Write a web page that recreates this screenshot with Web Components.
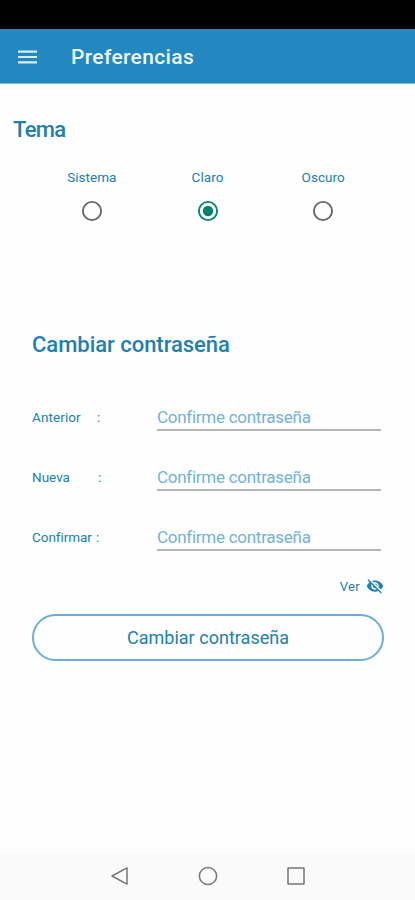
<!DOCTYPE html>
<html lang="es">
<head>
<meta charset="utf-8">
<title>Preferencias</title>
<style>
    body {
        margin: 0;
        background: #fefefe;
        color: #2080b0;
        font-family: Roboto, "Liberation Sans", sans-serif;
    }
</style>
</head>
<body>

<preferences-screen></preferences-screen>

<template id="screenTemplate">
    <style>
        :host {
            display: flex;
            flex-direction: column;
            height: 900px;
            width: 415px;
            overflow: hidden;
        }
        .status { height: 29px; background: #000; flex: none; }
        main { flex: 1; display: flex; flex-direction: column; }
        h2 { margin: 0; font-weight: 500; line-height: 26px; font-size: 22px; white-space: nowrap; }
        .theme { padding: 33px 0 0 13px; letter-spacing: -0.7px; }
        .options { display: flex; padding: 24px 34px 0 34px; }
        theme-option { flex: 1; }
        .password { padding: 110px 31px 0 32px; }
        .password h2 { letter-spacing: -0.03px; }
        .fields { margin-top: 43px; }
        .show {
            display: flex;
            justify-content: flex-end;
            align-items: center;
            gap: 6px;
            height: 20px;
            margin-top: -5px;
            font-size: 13px;
            letter-spacing: 0.3px;
        }
        .show svg { display: block; }
        pill-button { margin-top: 18px; }
    </style>
    <div class="status"></div>
    <app-header>Preferencias</app-header>
    <main>
        <h2 class="theme">Tema</h2>
        <div class="options">
            <theme-option>Sistema</theme-option>
            <theme-option checked>Claro</theme-option>
            <theme-option>Oscuro</theme-option>
        </div>
        <section class="password">
            <h2>Cambiar contraseña</h2>
            <div class="fields">
                <password-field colon="65" style="--ls: 0.1px">Anterior</password-field>
                <password-field colon="66">Nueva</password-field>
                <password-field colon="64" style="--ls: -0.05px">Confirmar</password-field>
            </div>
            <div class="show">
                <span>Ver</span>
                <svg width="18" height="18" viewBox="0 0 24 24" fill="#2080b0"><path d="M12 7c2.76 0 5 2.24 5 5 0 .65-.13 1.26-.36 1.83l2.92 2.92c1.51-1.26 2.7-2.89 3.43-4.75-1.73-4.39-6-7.5-11-7.5-1.4 0-2.74.25-3.98.7l2.16 2.16C10.74 7.13 11.35 7 12 7zM2 4.27l2.28 2.28.46.46C3.08 8.3 1.78 10.02 1 12c1.73 4.39 6 7.5 11 7.5 1.55 0 3.03-.3 4.38-.84l.42.42L19.73 22 21 20.73 3.27 3 2 4.27zM7.53 9.8l1.55 1.55c-.05.21-.08.43-.08.65 0 1.66 1.34 3 3 3 .22 0 .44-.03.65-.08l1.55 1.55c-.67.33-1.41.53-2.2.53-2.76 0-5-2.24-5-5 0-.79.2-1.53.53-2.2zm4.31-.78l3.15 3.15.02-.16c0-1.66-1.34-3-3-3l-.17.01z"/></svg>
            </div>
            <pill-button>Cambiar contraseña</pill-button>
        </section>
    </main>
    <system-nav></system-nav>
</template>

<template id="headerTemplate">
    <style>
        :host {
            display: flex;
            align-items: center;
            flex: none;
            box-sizing: border-box;
            height: 55px;
            padding: 1px 0 0 18px;
            background: #2387c0;
            border-bottom: 1px solid #7db8dc;
            color: #eef8ff;
            font-size: 21px;
            font-weight: 500;
            letter-spacing: 0.35px;
        }
        svg { margin-right: 33px; }
    </style>
    <svg width="20" height="14" viewBox="0 0 20 14"><path d="M0 1.7h19M0 7h19M0 12.3h19" stroke="#d8effb" stroke-width="2.2"/></svg>
    <slot></slot>
</template>

<template id="optionTemplate">
    <style>
        :host {
            display: flex;
            flex-direction: column;
            align-items: center;
            font-size: 13.5px;
            line-height: 20px;
            letter-spacing: 0.05px;
        }
        svg { margin-top: 13px; }
        circle { fill: none; stroke: #686868; stroke-width: 1.9; }
        .dot { display: none; }
        :host([checked]) circle { stroke: #0b8270; }
        :host([checked]) .dot { display: block; fill: #0b8270; stroke: none; }
    </style>
    <slot></slot>
    <svg width="22" height="22" viewBox="0 0 22 22"><circle cx="11" cy="11" r="9.1"/><circle class="dot" cx="11" cy="11" r="5.2"/></svg>
</template>

<template id="fieldTemplate">
    <style>
        :host { display: flex; height: 60px; }
        .label {
            display: flex;
            width: 125px;
            font-size: 13.5px;
            line-height: 26px;
            letter-spacing: var(--ls, 0);
            padding-top: 3px;
        }
        .entry {
            box-sizing: border-box;
            width: 224px;
            height: 30px;
            padding-top: 3px;
            border-bottom: 2px solid #b5b5b5;
            color: #72b2d7;
            font-size: 17px;
            line-height: 26px;
            letter-spacing: -0.27px;
            white-space: nowrap;
        }
    </style>
    <div class="label"><span class="name"><slot></slot></span><span>:</span></div>
    <div class="entry">Confirme contraseña</div>
</template>

<template id="buttonTemplate">
    <style>
        :host {
            display: flex;
            align-items: center;
            justify-content: center;
            box-sizing: border-box;
            height: 47px;
            border: 2px solid #6aadd6;
            border-radius: 24px;
            font-size: 18px;
            letter-spacing: 0.02px;
        }
    </style>
    <slot></slot>
</template>

<template id="navTemplate">
    <style>
        :host {
            display: flex;
            align-items: center;
            justify-content: center;
            gap: 68px;
            box-sizing: border-box;
            height: 47px;
            padding-bottom: 2px;
            background: #fafafa;
        }
        svg { fill: none; stroke: #777; stroke-width: 1.5; stroke-linejoin: round; }
    </style>
    <svg width="20" height="20" viewBox="0 0 20 20"><path d="M17 1.8v16.4L2 10z"/></svg>
    <svg width="20" height="20" viewBox="0 0 20 20"><circle cx="10" cy="10" r="8.6"/></svg>
    <svg width="20" height="20" viewBox="0 0 20 20"><rect x="2" y="2" width="16" height="16" rx="0.5"/></svg>
</template>

<script>
    (function preferences(customElements) {
        'use strict';

        class BaseElement extends HTMLElement {

            constructor(templateId) {
                super();
                const templ = document.querySelector(templateId);
                this.attachShadow({ mode: 'open' }).appendChild(document.importNode(templ.content, true));
            }

        }

        class AppHeader extends BaseElement {
            constructor() { super('#headerTemplate'); }
        }

        class ThemeOption extends BaseElement {
            constructor() { super('#optionTemplate'); }
        }

        class PasswordField extends BaseElement {

            constructor() { super('#fieldTemplate'); }

            // distance from the start of the label to the colon
            connectedCallback() {
                this.shadowRoot.querySelector('.name').style.width = this.getAttribute('colon') + 'px';
            }

        }

        class PillButton extends BaseElement {
            constructor() { super('#buttonTemplate'); }
        }

        class SystemNav extends BaseElement {
            constructor() { super('#navTemplate'); }
        }

        class PreferencesScreen extends BaseElement {
            constructor() { super('#screenTemplate'); }
        }

        customElements.define('app-header', AppHeader);
        customElements.define('theme-option', ThemeOption);
        customElements.define('password-field', PasswordField);
        customElements.define('pill-button', PillButton);
        customElements.define('system-nav', SystemNav);
        customElements.define('preferences-screen', PreferencesScreen);

    })(window.customElements);
</script>
</body>
</html>
